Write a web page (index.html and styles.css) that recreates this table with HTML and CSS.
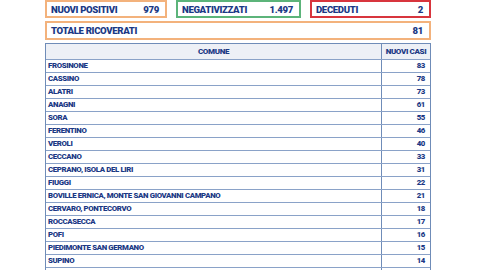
FILE: index.html
```html
<!DOCTYPE html>
<html lang="it">
<head>
<meta charset="utf-8">
<link rel="stylesheet" href="styles.css">
</head>
<body>
<div class="page">
  <div class="stats">
    <div class="stat stat-orange"><span>NUOVI POSITIVI</span><span>979</span></div>
    <div class="stat stat-green"><span>NEGATIVIZZATI</span><span>1.497</span></div>
    <div class="stat stat-red"><span>DECEDUTI</span><span>2</span></div>
  </div>
  <div class="stat stat-orange total"><span>TOTALE RICOVERATI</span><span>81</span></div>
  <div class="table">
    <div class="row head"><div class="c1">COMUNE</div><div class="c2">NUOVI CASI</div></div>
    <div class="row"><div class="c1">FROSINONE</div><div class="c2">83</div></div>
    <div class="row"><div class="c1">CASSINO</div><div class="c2">78</div></div>
    <div class="row"><div class="c1">ALATRI</div><div class="c2">73</div></div>
    <div class="row"><div class="c1">ANAGNI</div><div class="c2">61</div></div>
    <div class="row"><div class="c1">SORA</div><div class="c2">55</div></div>
    <div class="row"><div class="c1">FERENTINO</div><div class="c2">46</div></div>
    <div class="row"><div class="c1">VEROLI</div><div class="c2">40</div></div>
    <div class="row"><div class="c1">CECCANO</div><div class="c2">33</div></div>
    <div class="row"><div class="c1">CEPRANO, ISOLA DEL LIRI</div><div class="c2">31</div></div>
    <div class="row"><div class="c1">FIUGGI</div><div class="c2">22</div></div>
    <div class="row"><div class="c1">BOVILLE ERNICA, MONTE SAN GIOVANNI CAMPANO</div><div class="c2">21</div></div>
    <div class="row"><div class="c1">CERVARO, PONTECORVO</div><div class="c2">18</div></div>
    <div class="row"><div class="c1">ROCCASECCA</div><div class="c2">17</div></div>
    <div class="row"><div class="c1">POFI</div><div class="c2">16</div></div>
    <div class="row"><div class="c1">PIEDIMONTE SAN GERMANO</div><div class="c2">15</div></div>
    <div class="row"><div class="c1">SUPINO</div><div class="c2">14</div></div>
    <div class="row"><div class="c1">&nbsp;</div><div class="c2">&nbsp;</div></div>
  </div>
</div>
</body>
</html>
```
FILE: styles.css
```css
html, body {
  margin: 0;
  padding: 0;
  background: #ffffff;
  overflow: hidden;
}
.page {
  width: 386px;
  margin-left: 45px;
  font-family: Roboto, "Liberation Sans", sans-serif;
  font-weight: 900;
  color: #1b3985;
}
.stats {
  display: grid;
  grid-template-columns: 122px 125px 121px;
  column-gap: 9px;
}
.stat {
  box-sizing: border-box;
  height: 18px;
  border: 2px solid #f3b27c;
  display: flex;
  justify-content: space-between;
  align-items: center;
  padding: 0 6px 0 4px;
  font-size: 9.6px;
  letter-spacing: -0.35px;
}
.stat-orange { border-color: #f3b27c; }
.stat-green { border-color: #5cb47a; }
.stat-red { border-color: #d8353d; }
.total {
  margin-top: 3px;
  height: 19px;
}
.table {
  margin-top: 3px;
  border: 1px solid #6f8cb8;
  border-bottom: none;
}
.row {
  display: grid;
  grid-template-columns: 336px 1fr;
  box-sizing: border-box;
  height: 13px;
  border-bottom: 1px solid #8aa2c8;
  font-size: 7.8px;
  letter-spacing: -0.35px;
  line-height: 12px;
}
.row.head {
  height: 16px;
  background: #edf0f6;
  line-height: 15px;
  font-size: 8px;
}
.c1 {
  border-right: 1px solid #6f8cb8;
  padding-left: 2px;
}
.c2 {
  text-align: right;
  padding-right: 5px;
}
.head .c1, .head .c2 {
  text-align: center;
  padding: 0;
}
```
